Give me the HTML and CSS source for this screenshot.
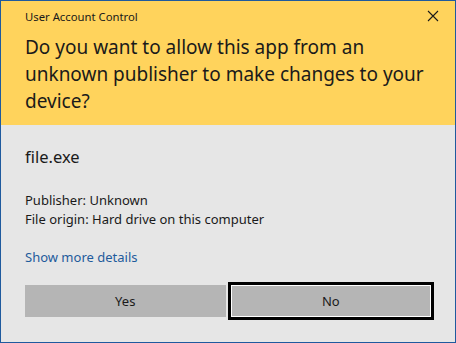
FILE: index.html
```html
<!DOCTYPE html>
<html lang="en">
<head>
    <meta charset="UTF-8">
    <title>User Account Control</title>
    <link rel="stylesheet" href="styles.css">
</head>
<body>

    <div class="uac-window">
        <div class="uac-header">
            <div class="titlebar">
                <span class="title">User Account Control</span>
                <svg class="close" width="12" height="12" viewBox="0 0 12 12">
                    <path d="M1 1 L11 11 M11 1 L1 11" stroke="#1a1a1a" stroke-width="1.1" fill="none"/>
                </svg>
            </div>
            <h1 class="question">Do you want to allow this app from an unknown publisher to make changes to your device?</h1>
        </div>

        <div class="uac-body">
            <div class="program-name">file.exe</div>
            <div class="program-info">
                <p>Publisher: Unknown</p>
                <p>File origin: Hard drive on this computer</p>
            </div>
            <a class="details-link" href="#">Show more details</a>
            <div class="buttons">
                <button class="btn">Yes</button>
                <button class="btn btn-focus">No</button>
            </div>
        </div>
    </div>

</body>
</html>
```

FILE: styles.css
```css
html, body {
    margin: 0;
    padding: 0;
}
body {
    font-family: 'Noto Sans', 'Open Sans', sans-serif;
    color: #1a1a1a;
    background-color: #e6e6e6;
}
.uac-window {
    width: 456px;
    height: 343px;
    box-sizing: border-box;
    border: 1px solid #1f5a9e;
    background-color: #e6e6e6;
    display: flex;
    flex-direction: column;
}
.uac-header {
    background-color: #ffd35c;
    padding: 0 0 10px 24px;
}
.titlebar {
    height: 30px;
    display: flex;
    align-items: center;
    justify-content: space-between;
    padding-right: 16px;
}
.titlebar .title {
    font-size: 11.3px;
}
.question {
    margin: 3px 24px 0 0;
    font-size: 19px;
    font-weight: normal;
    line-height: 27px;
}
.uac-body {
    padding: 0 21px 0 24px;
}
.program-name {
    margin-top: 20px;
    font-size: 16.5px;
    line-height: 24px;
}
.program-info {
    margin-top: 22px;
    font-size: 13px;
    line-height: 19px;
}
.program-info p {
    margin: 0;
}
.details-link {
    display: inline-block;
    margin-top: 19px;
    font-size: 13px;
    line-height: 19px;
    color: #1e5b9c;
    text-decoration: none;
}
.buttons {
    margin-top: 18px;
    display: flex;
    gap: 5px;
}
.btn {
    flex: 1;
    height: 32px;
    border: none;
    background-color: #b5b5b5;
    font-family: inherit;
    font-size: 13px;
    color: #1a1a1a;
}
.btn-focus {
    box-shadow: inset 0 0 0 1px #fff, 0 0 0 3px #000;
    margin-right: 3px;
}
```
